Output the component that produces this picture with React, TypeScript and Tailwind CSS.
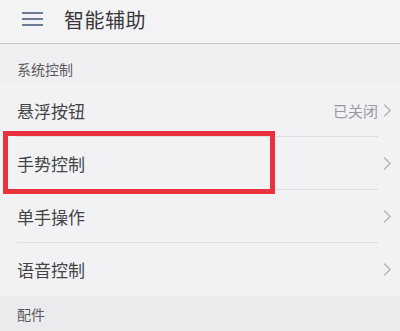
import React from "react";

const Chevron = () => (
  <svg width="9" height="13" viewBox="0 0 9 13" fill="none" className="ml-[5px]">
    <path d="M1.5 1 L7.2 6.5 L1.5 12" stroke="#b4b4b8" strokeWidth="1.4" strokeLinecap="round" strokeLinejoin="round" />
  </svg>
);

function Row({ label, value, highlight, last }: { label: string; value?: string; highlight?: boolean; last?: boolean }) {
  return (
    <div className="relative h-[53px] flex items-center pl-[17px] pr-[8px]">
      <span className="text-[17px] text-[#444446] leading-none">{label}</span>
      <div className="ml-auto flex items-center">
        {value && <span className="text-[15px] text-[#9a9a9e] leading-none">{value}</span>}
        <Chevron />
      </div>
      {!last && <div className="absolute left-[17px] right-[22px] bottom-0 h-px bg-[#dedee0]" />}
      {highlight && (
        <div className="absolute left-[3px] top-[-6px] w-[272px] h-[63px] border-[5px] border-[#e8323c]" />
      )}
    </div>
  );
}

export default function App() {
  return (
    <div
      className="w-[400px] h-[331px] overflow-hidden bg-[#f0f0f2]"
      style={{ fontFamily: '"Noto Sans CJK SC", "Noto Sans", sans-serif' }}
    >
      <div className="h-[44px] flex items-center border-b border-[#c6c6c9] bg-[#f3f3f5]">
        <svg width="22" height="16" viewBox="0 0 22 16" className="ml-[22px] mt-[-6px]">
          <rect x="0" y="1" width="21" height="2" fill="#6b7c94" />
          <rect x="0" y="7" width="21" height="2" fill="#6b7c94" />
          <rect x="0" y="13" width="21" height="2" fill="#6b7c94" />
        </svg>
        <span className="ml-[20px] mt-[-4px] text-[20px] text-[#38383a] leading-none tracking-[0.5px]">智能辅助</span>
      </div>
      <div className="h-[40px] flex items-center pl-[17px] pt-[10px]">
        <span className="text-[14px] text-[#5a5a5c] leading-none">系统控制</span>
      </div>
      <div className="bg-[#f2f2f4]">
        <Row label="悬浮按钮" value="已关闭" />
        <Row label="手势控制" highlight />
        <Row label="单手操作" />
        <Row label="语音控制" last />
      </div>
      <div className="h-[40px] flex items-center pl-[17px] pb-[4px] bg-[#ebebed]">
        <span className="text-[14px] text-[#5a5a5c] leading-none">配件</span>
      </div>
    </div>
  );
}
